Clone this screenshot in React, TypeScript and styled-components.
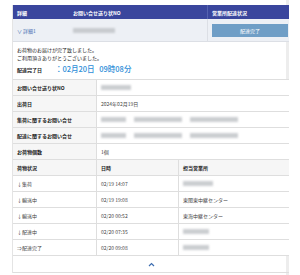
import styled, { createGlobalStyle } from 'styled-components';

const GlobalStyle = createGlobalStyle`
  html, body {
    margin: 0;
    padding: 0;
    background: #fff;
  }
  body {
    font-family: "Noto Sans CJK JP", "Noto Sans", sans-serif;
    color: #333;
  }
`;

const Page = styled.div`
  width: 289px;
  min-height: 275px;
  border-right: 3px solid #ededed;
  padding: 5px 0 0 12px;
  box-sizing: border-box;
`;

const Panel = styled.div`
  width: 277px;
  border-left: 1px solid #e4e4e4;
  box-sizing: border-box;
`;

const HeadBar = styled.div`
  display: grid;
  grid-template-columns: 56px 138px 1fr;
  height: 14px;
  background: #3a469d;
  color: #fff;
  font-size: 5px;
  font-weight: 700;
`;

const HeadCell = styled.div<{ $divider?: boolean }>`
  display: flex;
  align-items: center;
  padding-left: 4px;
  border-left: ${({ $divider }) => ($divider ? '1px solid #5562b0' : 'none')};
`;

const DetailRow = styled.div`
  display: grid;
  grid-template-columns: 56px 138px 1fr;
  height: 22px;
  background: #edf0f5;
  border-bottom: 1px solid #dcdfe5;
  font-size: 5px;
`;

const DetailCell = styled.div<{ $divider?: boolean }>`
  display: flex;
  align-items: center;
  padding-left: 4px;
  border-left: ${({ $divider }) => ($divider ? '1px solid #dcdfe5' : 'none')};
`;

const Toggle = styled.span`
  color: #3d6db0;
`;

const DoneButton = styled.div`
  width: 76px;
  height: 13px;
  background: #6f9ec6;
  color: #fff;
  font-size: 5px;
  display: flex;
  align-items: center;
  justify-content: center;
`;

const Blur = styled.span<{ $w: number }>`
  display: inline-block;
  width: ${({ $w }) => $w}px;
  height: 5px;
  background: #bfc2c6;
  filter: blur(1.3px);
  margin-right: 8px;
  opacity: 0.8;
`;

const Message = styled.div`
  padding: 4px 4px 0;
  height: 37px;
  box-sizing: border-box;
  font-size: 5px;
  line-height: 8px;
  color: #222;
`;

const DateLine = styled.div`
  display: flex;
  align-items: baseline;
  margin-top: 3px;
  font-weight: 700;
`;

const DateLabel = styled.span`
  width: 38px;
`;

const DateValue = styled.span`
  color: #2d8ed8;
  font-size: 7.5px;
  font-weight: 500;
  word-spacing: 3px;
`;

const Table = styled.div`
  border-top: 1px solid #dedede;
`;

const Row = styled.div<{ $cols: string; $head?: boolean }>`
  display: grid;
  grid-template-columns: ${({ $cols }) => $cols};
  height: 16px;
  border-bottom: 1px solid #dedede;
  box-sizing: border-box;
  font-size: 5px;
  background: ${({ $head }) => ($head ? '#f3f3f2' : '#fff')};
`;

const Cell = styled.div<{ $label?: boolean; $first?: boolean }>`
  display: flex;
  align-items: center;
  padding-left: 4px;
  font-weight: ${({ $label }) => ($label ? 700 : 400)};
  color: ${({ $label }) => ($label ? '#222' : '#444')};
  background: ${({ $label }) => ($label ? '#f6f6f6' : 'transparent')};
  border-left: ${({ $first }) => ($first ? 'none' : '1px solid #dedede')};
`;

const Footer = styled.div`
  height: 16px;
  display: flex;
  align-items: center;
  justify-content: center;
  border-bottom: 1px solid #dedede;
`;

const infoRows: { label: string; value: React.ReactNode }[] = [
  { label: 'お問い合せ送り状NO', value: <Blur $w={30} /> },
  { label: '出荷日', value: '2024年02月19日' },
  {
    label: '集荷に関するお問い合せ',
    value: (
      <>
        <Blur $w={25} />
        <Blur $w={48} />
        <Blur $w={48} />
      </>
    ),
  },
  {
    label: '配達に関するお問い合せ',
    value: (
      <>
        <Blur $w={25} />
        <Blur $w={48} />
        <Blur $w={48} />
      </>
    ),
  },
  { label: 'お荷物個数', value: '1個' },
];

const statusRows: { status: string; time: string; office: React.ReactNode }[] = [
  { status: '↓集荷', time: '02/19 14:07', office: <Blur $w={30} /> },
  { status: '↓輸送中', time: '02/19 19:08', office: '東関東中継センター' },
  { status: '↓輸送中', time: '02/20 00:52', office: '東海中継センター' },
  { status: '↓配達中', time: '02/20 07:35', office: <Blur $w={26} /> },
  { status: '⇒配達完了', time: '02/20 09:08', office: <Blur $w={26} /> },
];

const COLS2 = '83px 1fr';
const COLS3 = '83px 82px 1fr';

export default function App() {
  return (
    <>
      <GlobalStyle />
      <Page>
        <Panel>
          <HeadBar>
            <HeadCell>詳細</HeadCell>
            <HeadCell>お問い合せ送り状NO</HeadCell>
            <HeadCell $divider>営業所配達状況</HeadCell>
          </HeadBar>
          <DetailRow>
            <DetailCell>
              <Toggle>∨ 詳細1</Toggle>
            </DetailCell>
            <DetailCell>
              <Blur $w={42} />
            </DetailCell>
            <DetailCell $divider>
              <DoneButton>配達完了</DoneButton>
            </DetailCell>
          </DetailRow>
          <Message>
            <div>お荷物のお届けが完了致しました。</div>
            <div>ご利用頂きありがとうございました。</div>
            <DateLine>
              <DateLabel>配達完了日</DateLabel>
              <DateValue>：02月20日 09時08分</DateValue>
            </DateLine>
          </Message>
          <Table>
            {infoRows.map((r) => (
              <Row key={r.label} $cols={COLS2}>
                <Cell $label $first>
                  {r.label}
                </Cell>
                <Cell>{r.value}</Cell>
              </Row>
            ))}
            <Row $cols={COLS3} $head>
              <Cell $label $first>
                荷物状況
              </Cell>
              <Cell $label>日時</Cell>
              <Cell $label>担当営業所</Cell>
            </Row>
            {statusRows.map((r, i) => (
              <Row key={i} $cols={COLS3}>
                <Cell $first>{r.status}</Cell>
                <Cell>{r.time}</Cell>
                <Cell>{r.office}</Cell>
              </Row>
            ))}
            <Footer>
              <svg width="7" height="5" viewBox="0 0 7 5">
                <path d="M1 4 L3.5 1.5 L6 4" fill="none" stroke="#3d6db0" strokeWidth="1.2" />
              </svg>
            </Footer>
          </Table>
        </Panel>
      </Page>
    </>
  );
}
